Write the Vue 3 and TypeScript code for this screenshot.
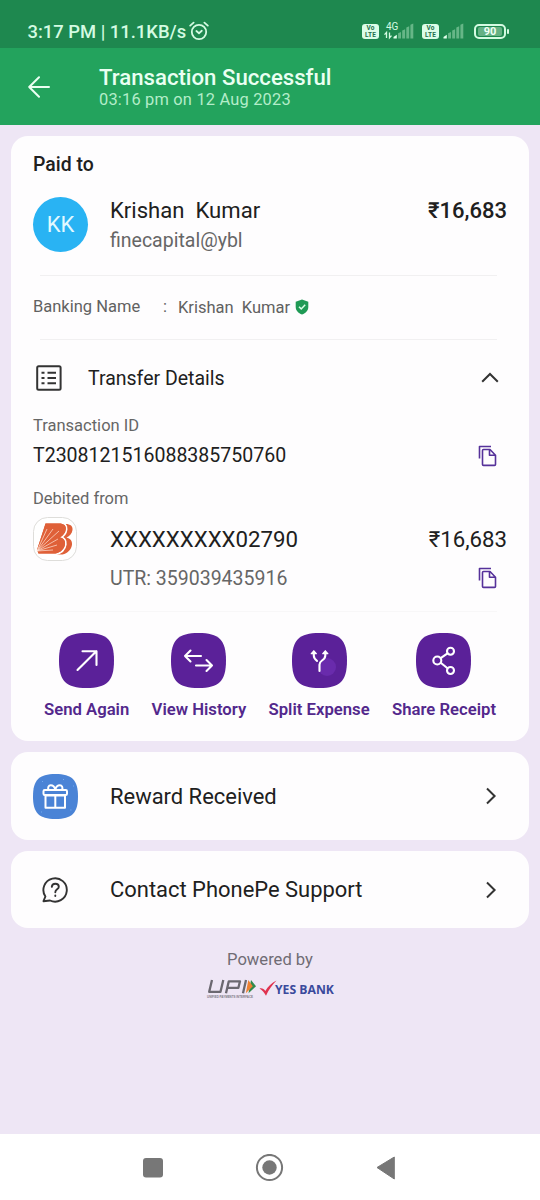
<script setup lang="ts">
interface Signal {
  id: string
  network: string
}

interface Action {
  icon: 'send' | 'history' | 'split' | 'share'
  label: string
}

const signals: Signal[] = [
  { id: 'sim1', network: '4G' },
  { id: 'sim2', network: '' },
]

const actions: Action[] = [
  { icon: 'send', label: 'Send Again' },
  { icon: 'history', label: 'View History' },
  { icon: 'split', label: 'Split Expense' },
  { icon: 'share', label: 'Share Receipt' },
]
</script>

<template>
  <div class="screen">
    <div class="status">
      <span class="clock">3:17 PM | 11.1KB/s</span>
      <svg class="alarm" width="20" height="20" viewBox="0 0 20 20" fill="none" stroke="#d4fbe2" stroke-width="1.8" stroke-linecap="round" stroke-linejoin="round">
        <circle cx="10" cy="11" r="7.2" />
        <path d="M1.2 4.6 4.6 1.6M18.8 4.6 15.4 1.6M7.4 10 10 12.2 12.8 9.8" />
      </svg>
      <div class="tray">
        <template v-for="s in signals" :key="s.id">
          <span class="volte"><i>Vo</i><i>LTE</i></span>
          <span class="signal" :class="{ wide: s.network }">
            <span v-if="s.network" class="network">{{ s.network }}</span>
            <svg width="33" height="20" viewBox="0 0 33 20">
              <path v-if="s.network" d="M5.5 18v-5M3.5 14.6l2-2.2v2.2M8.5 12.5v5M10.5 15.6l-2 2.2v-2.2" stroke="#d4fbe2" stroke-width="1.3" fill="none" />
              <path d="M12.500 18.500v-1.600l3.300-2.200v3.800z" fill="#e2ffec" />
              <path d="M17.100 18.500v-5.300l2.900-1.200v6.500zM21.200 18.500V10.600l2.900-1.300v9.200zM25.300 18.500V7.600l2.900-1.300v12.200zM29.400 18.500V4.800l2.900-1.200v14.900z" fill="#66b687" />
            </svg>
          </span>
        </template>
        <span class="battery"><b>90</b></span>
      </div>
    </div>

    <header class="header">
      <svg class="back" width="22" height="22" viewBox="0 0 22 22" fill="none" stroke="#eafff2" stroke-width="2" stroke-linecap="round" stroke-linejoin="round">
        <path d="M21 11H1.2M11 1.2 1.2 11l9.8 9.8" />
      </svg>
      <div>
        <h1>Transaction Successful</h1>
        <p>03:16 pm on 12 Aug 2023</p>
      </div>
    </header>

    <main class="content">
      <section class="card receipt">
        <h2>Paid to</h2>
        <div class="payee">
          <span class="avatar">KK</span>
          <div class="who">
            <div class="name">Krishan&nbsp; Kumar</div>
            <div class="vpa">finecapital@ybl</div>
          </div>
          <div class="amount strong">₹16,683</div>
        </div>
        <hr />
        <div class="banking">
          <span class="bk-label">Banking Name</span>
          <span class="colon">:</span>
          <span class="bk-name">Krishan&nbsp; Kumar</span>
          <svg class="shield" width="14" height="16" viewBox="0 0 14 16">
            <path d="M7 .5 13.3 2.8V8c0 3.6-2.5 6-6.3 7.5C3.2 14 .7 11.6.7 8V2.8z" fill="#1f9a55" />
            <path d="M4 7.8 6.2 9.9 10.2 5.8" fill="none" stroke="#d8ffe8" stroke-width="1.5" />
          </svg>
        </div>
        <hr />
        <div class="details">
          <svg width="26" height="26" viewBox="0 0 26 26" fill="none" stroke="#333" stroke-width="2">
            <rect x="1.2" y="1.2" width="23.4" height="23.6" rx="1.5" />
            <path d="M5.5 7.8h3M5.5 13h3M5.5 18.3h3M11.5 7.8h8.500M11.5 13h8.500M11.5 18.3h8.500" />
          </svg>
          <span class="dt-title">Transfer Details</span>
          <svg class="end" width="18" height="12" viewBox="0 0 18 12" fill="none" stroke="#333" stroke-width="2">
            <path d="M1.2 9.8 9 2l7.8 7.8" />
          </svg>
        </div>

        <div class="label">Transaction ID</div>
        <div class="value-row">
          <span class="txn">T2308121516088385750760</span>
          <svg class="copy" width="20" height="22" viewBox="0 0 20 22" fill="none" stroke="#56329a" stroke-width="1.6" stroke-linejoin="round">
            <path d="M1.5 13.5V1.5h11.5M5.5 4.5h6.500l5.500 5.700v9.200a1 1 0 0 1-1 1H5.500a1 1 0 0 1-1-1V5.500a1 1 0 0 1 1-1zM11.500 4.500v5.700h6" />
          </svg>
        </div>

        <div class="label debited">Debited from</div>
        <div class="bank-row">
          <svg class="bank" width="44" height="44" viewBox="0 0 44 44">
            <rect x=".5" y=".5" width="43" height="43" rx="14" fill="#fff" stroke="#deddda" />
            <path d="M24 7h8.500c5 0 7.500 2.300 7 6-.5 3.800-2.700 6-6 7.500 3.800 1 6 3.500 5.500 7.300-.7 5-4.500 8.700-9.500 9.700H20z" fill="#df6038" />
            <path d="M12.500 6.500H26c5 0 7.300 2.300 6.800 5.800-.5 3.800-2.700 6.500-6 8 3.800 1 5.700 3.500 5.200 7-.7 5-4.500 8.200-9.500 9.200H5.500L4 33z" fill="#df6038" stroke="#fff" stroke-width="3.400" paint-order="stroke" />
            <path d="M12.500 6.500H26c5 0 7.300 2.300 6.800 5.800-.5 3.800-2.700 6.500-6 8 3.800 1 5.700 3.500 5.200 7-.7 5-4.500 8.200-9.500 9.200H5.500L4 33z" fill="#df6038" />
            <path d="M4 34 14 12M4 34 20 12M4 34 26 14M4 34 25 22M4 34 24 28M4 34 20 33" stroke="#ffe6da" stroke-width=".7" fill="none" />
          </svg>
          <span class="account">XXXXXXXXX02790</span>
          <span class="amount">₹16,683</span>
        </div>
        <div class="utr-row">
          <span class="utr">UTR: 359039435916</span>
          <svg class="copy" width="20" height="22" viewBox="0 0 20 22" fill="none" stroke="#56329a" stroke-width="1.6" stroke-linejoin="round">
            <path d="M1.5 13.5V1.5h11.5M5.5 4.5h6.500l5.500 5.700v9.200a1 1 0 0 1-1 1H5.500a1 1 0 0 1-1-1V5.500a1 1 0 0 1 1-1zM11.500 4.500v5.700h6" />
          </svg>
        </div>
        <hr class="faint" />

        <div class="actions">
          <div v-for="a in actions" :key="a.icon" class="action">
            <svg width="55" height="55" viewBox="0 0 55 55" fill="none" stroke="#fff" stroke-width="2.1" stroke-linecap="round" stroke-linejoin="round">
              <path d="M27.5 0C48 0 55 7 55 27.5S48 55 27.5 55 0 48 0 27.5 7 0 27.5 0z" fill="#5b2199" stroke="none" />
              <path v-if="a.icon === 'send'" d="M18.5 37 37.3 18.2M23.5 18.2H37.5V32" />
              <path v-else-if="a.icon === 'history'" d="M30 23H14M19.5 17.5 14 23l5.5 5.5M25 32.5H41M35.5 27 41 32.5 35.5 38" />
              <template v-else-if="a.icon === 'split'">
                <circle cx="35" cy="34" r="9" fill="#692bac" stroke="none" />
                <path d="M21.8 20.5v2c0 2.500 1.300 4 3.200 5.300M33.300 20.500v2c0 2.500-1.500 3.800-3.300 5-1.800 1.300-2.500 2.300-2.500 4.200V38" />
                <path d="M19.300 20.700l2.500-2.900 2.500 2.900zM30.800 20.700l2.500-2.900 2.500 2.900z" fill="#fff" stroke-width="1.300" />
              </template>
              <template v-else>
                <circle cx="21.3" cy="27.5" r="4" />
                <circle cx="34.5" cy="18.3" r="3.5" />
                <circle cx="34.5" cy="37.5" r="3.5" />
                <path d="M24.7 25.2 31.5 20.3M24.7 29.8 31.5 35.3" />
              </template>
            </svg>
            <span>{{ a.label }}</span>
          </div>
        </div>
      </section>

      <section class="card link reward">
        <svg class="gift" width="45" height="45" viewBox="0 0 45 45" fill="none" stroke="#fff" stroke-width="2" stroke-linejoin="round">
          <path d="M22.5 0C39 0 45 6 45 22.5S39 45 22.5 45 0 39 0 22.5 6 0 22.5 0z" fill="#4a83d6" stroke="none" />
          <rect x="10.5" y="16" width="23.5" height="5" rx="1.2" />
          <path d="M12.5 21.5h19.500v12.300h-19.500zM22.300 21.500v12.300M22.300 15.500c-.8-2.800-2.500-4.200-4.600-4.200-2 0-3.200 2-2.200 4.500M22.300 15.500c.8-2.800 2.500-4.200 4.600-4.200 2 0 3.200 2 2.200 4.500" />
          <path d="M9 7.500h.8M30 5.500h.8M37.500 36h.8M8 38h.8M40 12h.8" stroke="#7fb4f5" stroke-width="1.2" />
        </svg>
        <span class="link-title r-title">Reward Received</span>
        <svg class="end chev" width="12" height="18" viewBox="0 0 12 18" fill="none" stroke="#333" stroke-width="2"><path d="M2 1.5 9.6 9 2 16.5" /></svg>
      </section>

      <section class="card link support">
        <svg class="help" width="28" height="28" viewBox="0 0 28 28" fill="none" stroke="#333" stroke-width="1.9" stroke-linecap="round" stroke-linejoin="round">
          <path d="M2.5 25.2 4.4 20.5A11.7 11.7 0 1 1 9 24.5z" />
          <path d="M10.800 10.800c.2-2 1.500-3.100 3.500-3.100 2.100 0 3.500 1.200 3.500 3 0 2.600-3.500 2.700-3.500 5.500M14.300 19.500v.6" />
        </svg>
        <span class="link-title s-title">Contact PhonePe Support</span>
        <svg class="end chev" width="12" height="18" viewBox="0 0 12 18" fill="none" stroke="#333" stroke-width="2"><path d="M2 1.5 9.6 9 2 16.5" /></svg>
      </section>

      <footer class="powered">
        <p>Powered by</p>
        <div class="brands">
          <svg width="52" height="24" viewBox="0 0 52 24">
            <g fill="none" stroke="#6b6870" stroke-width="2.3" stroke-linejoin="round">
              <path d="M6 1 3.2 12.800H14.500L17.300 1M20 14.200 22.800 2.300H34L32.400 8.800H22M37 14.200 40 1" />
            </g>
            <path d="M45 1 50 7.300 42.500 14.200z" fill="#2f8a4c" />
            <path d="M42.300 1 46.800 7.300 39.800 14.200z" fill="#ee8132" />
            <text x="1" y="18.500" textLength="46" lengthAdjust="spacingAndGlyphs" class="upi-tag">UNIFIED PAYMENTS INTERFACE</text>
          </svg>
          <svg class="tick" width="18" height="17" viewBox="0 0 18 17"><path d="M.5 8.500C3 7.800 5 9 6.300 11 9 6.500 12.500 2.800 17.500.5 13 5 9.500 10 7 15.800 5.500 13 3.500 10.500.5 8.500z" fill="#e0324f" /></svg>
          <span class="yes">YES BANK</span>
        </div>
      </footer>
    </main>

    <nav class="nav">
      <svg width="252" height="28" viewBox="0 0 252 28">
        <rect x="0" y="4" width="20" height="19.5" rx="3" fill="#777" />
        <circle cx="126.5" cy="13.5" r="12.6" fill="none" stroke="#777" stroke-width="2" />
        <circle cx="126.5" cy="13.5" r="7.2" fill="#777" />
        <path d="M234 13.5 251.3 3v22z" fill="#777" stroke="#777" stroke-linejoin="round" />
      </svg>
    </nav>
  </div>
</template>

<style>
body {
  margin: 0;
  background: #eee6f5;
}
</style>

<style scoped>
.screen {
  width: 540px;
  height: 1200px;
  display: flex;
  flex-direction: column;
  overflow: hidden;
  background: #eee6f5;
  font-family: Roboto, "Noto Sans", sans-serif;
  color: #202020;
  white-space: nowrap;
}
.screen svg { display: block; flex: none; }
h1, h2, p { margin: 0; }
.status {
  height: 48px;
  box-sizing: border-box;
  padding: 16px 34px 0 27.5px;
  display: flex;
  background: #1e884f;
  color: #d4fbe2;
}
.clock { font-size: 18.4px; line-height: 32px; font-weight: 500; }
.alarm { margin: 5px 0 0 2.5px; }
.tray { margin-left: auto; display: flex; padding-top: 8px; }
.volte {
  width: 17px;
  height: 15px;
  border-radius: 3px;
  background: #dcfde8;
  color: #1e704a;
  display: flex;
  flex-direction: column;
  align-items: center;
  justify-content: center;
}
.volte i { font: 700 6.5px/7px Roboto, sans-serif; letter-spacing: .2px; }
.signal { width: 35px; position: relative; }
.signal.wide { width: 43px; }
.signal svg { margin: -4px 0 0 -8px; }
.signal.wide svg { margin-left: 2px; }
.network { position: absolute; left: 7px; top: -3px; font-size: 10px; line-height: 12px; }
.battery {
  position: relative;
  width: 28px;
  height: 11px;
  border: 2px solid #d4fbe2;
  border-radius: 5px;
  display: flex;
  align-items: center;
  justify-content: center;
}
.battery b {
  width: 24px;
  height: 9px;
  border-radius: 2px;
  background: #64b184;
  color: #effff5;
  font-size: 11px;
  line-height: 10px;
  text-align: center;
}
.battery::after {
  content: "";
  position: absolute;
  right: -5px;
  top: 3px;
  width: 2px;
  height: 5px;
  border-radius: 1px;
  background: #d4fbe2;
}
.header {
  height: 77px;
  display: flex;
  background: #23a35d;
  color: #eafff2;
}
.back { margin: 27.5px 49px 0 28px; }
.header h1 { font-size: 22.2px; line-height: 26px; font-weight: 500; margin-top: 16px; }
.header p { font-size: 16.4px; line-height: 20px; color: #b3edc9; letter-spacing: .2px; }
.content {
  flex: 1;
  display: flex;
  flex-direction: column;
  gap: 11px;
  padding: 11px;
}
.card { background: #fefdfe; border-radius: 17px; }
.receipt { height: 605px; box-sizing: border-box; padding: 0 22px; }
h2 { height: 55px; padding-top: 1px; font-size: 19.4px; line-height: 55px; font-weight: 500; }
hr { height: 1px; border: 0; margin: 0 10px 0 7px; background: #f1f0f1; }
hr.faint { margin-top: 16px; background: #f8f7f8; }
.payee { display: flex; height: 80px; padding-top: 3px; }
.avatar {
  width: 55px;
  height: 55px;
  margin: 2px 22px 0 0;
  border-radius: 50%;
  background: #29b3f3;
  color: #e3f9ff;
  font-size: 22px;
  line-height: 56px;
  text-align: center;
}
.name { font-size: 22.1px; line-height: 31px; }
.vpa { font-size: 19.5px; line-height: 29px; color: #666; }
.amount { margin-left: auto; font-size: 22.2px; line-height: 31px; }
.strong { font-size: 22px; font-weight: 500; }
.banking { display: flex; align-items: center; height: 61px; padding-bottom: 2px; font-size: 16.5px; color: #616161; }
.bk-label { width: 130px; }
.colon { width: 15px; }
.bk-name { margin: 2px 5px 0 0; }
.shield { margin-top: 1px; }
.details { display: flex; align-items: center; height: 76px; padding: 0 8px 0 3px; }
.dt-title { margin-left: 26px; font-size: 19.5px; }
.end { margin-left: auto; }
.label { font-size: 16.5px; line-height: 20px; color: #666; }
.value-row { display: flex; align-items: center; height: 39px; }
.txn { font-size: 19.55px; }
.copy { margin: 0 9px 0 auto; }
.debited { margin-top: 14px; }
.bank-row { display: flex; align-items: center; height: 44px; margin-top: 8px; }
.account { margin-left: 33px; font-size: 22.25px; }
.utr-row { display: flex; align-items: center; height: 34px; padding-left: 77px; }
.utr { font-size: 19.5px; color: #666; }
.actions { display: flex; justify-content: space-between; margin: 21px 11px 0; }
.action { display: flex; flex-direction: column; align-items: center; }
.action span { margin-top: 12px; font-size: 16.7px; line-height: 20px; font-weight: 600; color: #53288c; }
.link { display: flex; align-items: center; box-sizing: border-box; padding: 0 32px 0 22px; }
.reward { height: 88px; }
.support { height: 77px; }
.link-title { font-size: 21.95px; }
.r-title { margin-left: 32px; }
.help { margin-left: 8px; }
.s-title { margin-left: 41px; }
.powered p { font-size: 16.6px; line-height: 20px; margin-top: 11px; text-align: center; color: #706c74; }
.brands { display: flex; margin: 9px 0 0 195px; }
.upi-tag { font: 700 3.6px "Liberation Sans", sans-serif; fill: #807b85; }
.tick { margin: 1px 0 0 1px; }
.yes { margin-left: -2px; font: 700 12.2px/22px "Open Sans", "Noto Sans", sans-serif; color: #3a4a9c; }
.nav { height: 66px; box-sizing: border-box; padding: 20px 0 0 143px; background: #fff; }
</style>
